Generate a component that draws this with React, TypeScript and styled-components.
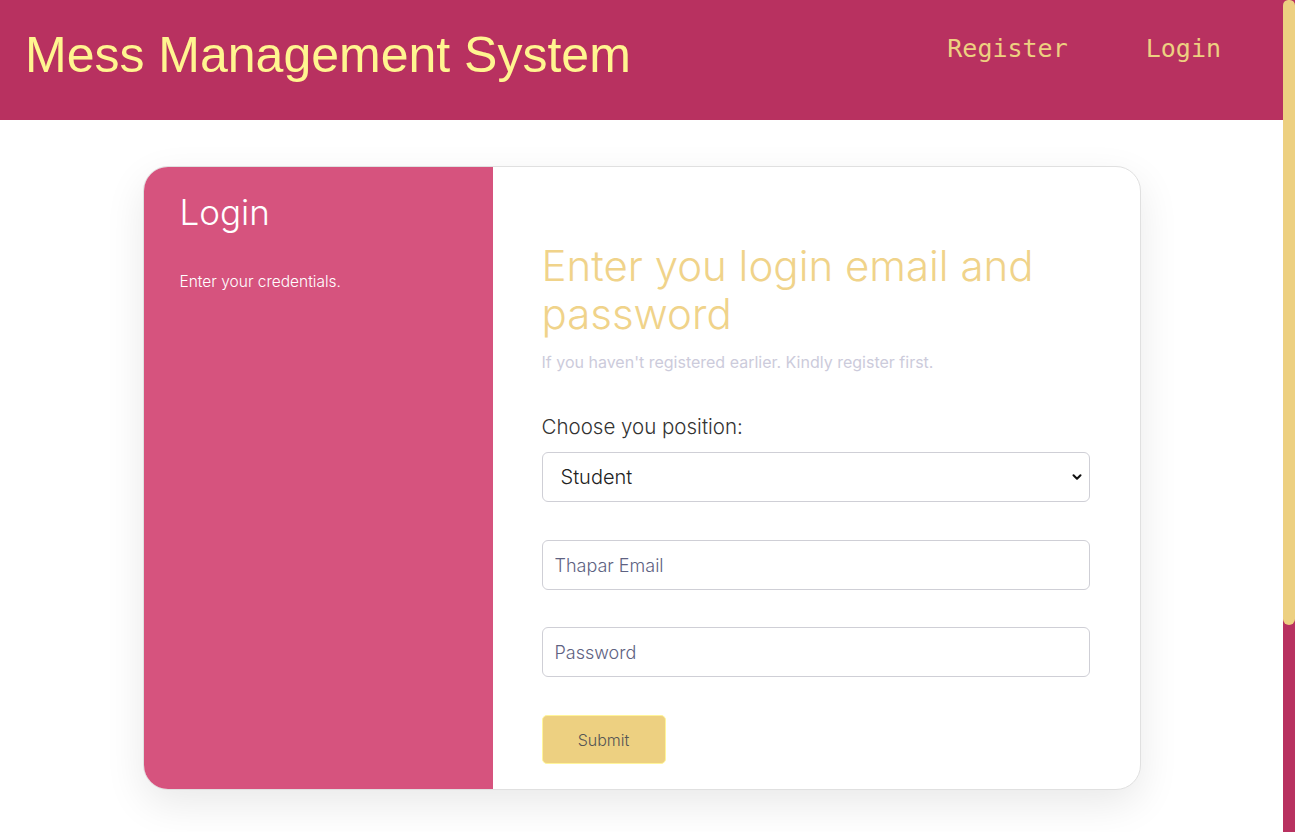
import React from "react";
import styled, { createGlobalStyle } from "styled-components";
import { ChevronDown } from "lucide-react";

const Global = createGlobalStyle`
  html, body { margin: 0; padding: 0; background: #ffffff; }
  body { font-family: "Inter", "Noto Sans", sans-serif; padding-right: 12px; }
  * { box-sizing: border-box; }
  ::-webkit-scrollbar { width: 0; }
`;

const ScrollTrack = styled.div`
  position: fixed;
  top: 0;
  right: 0;
  width: 12px;
  height: 100vh;
  background: #b83160;
  z-index: 10;
`;

const ScrollThumb = styled.div`
  height: 625px;
  background: #edd081;
  border-radius: 6px 6px 7px 7px;
`;

const Header = styled.header`
  height: 120px;
  background: #b83160;
  display: flex;
  align-items: flex-start;
  justify-content: space-between;
  padding: 0 62px 0 25px;
`;

const Title = styled.h1`
  margin: 25px 0 0;
  font-family: "Liberation Sans", Arial, sans-serif;
  font-weight: 400;
  font-size: 50px;
  line-height: 60px;
  color: #fff590;
`;

const Nav = styled.nav`
  display: flex;
  gap: 78px;
  margin-top: 34px;
`;

const NavLink = styled.a`
  font-family: "DejaVu Sans Mono", "Liberation Mono", monospace;
  font-size: 25px;
  line-height: 30px;
  color: #edd081;
  text-decoration: none;
  cursor: pointer;
`;

const Main = styled.main`
  padding: 46px 0 318px;
`;

const Card = styled.div`
  width: 998px;
  height: 624px;
  margin: 0 auto;
  display: grid;
  grid-template-columns: 349px 1fr;
  border-radius: 25px;
  border: 1px solid #e0e0e0;
  overflow: hidden;
  box-shadow: 0 14px 40px rgba(0, 0, 0, 0.09);
  background: #fff;
`;

const Side = styled.aside`
  background: #d6537e;
  padding: 23px 36px;
  color: #fff;
`;

const SideTitle = styled.h2`
  margin: 0;
  font-weight: 300;
  font-size: 35px;
  line-height: 44px;
  color: #ffffff;
`;

const SideText = styled.p`
  margin: 38px 0 0;
  font-size: 15.5px;
  font-weight: 300;
  line-height: 20px;
  color: #fff;
`;

const FormPane = styled.section`
  padding: 75px 50px 0 49px;
  display: flex;
  flex-direction: column;
  align-items: flex-start;
`;

const Heading = styled.h3`
  margin: 0;
  font-weight: 300;
  font-size: 42px;
  line-height: 48px;
  color: #f0d38a;
`;

const Sub = styled.p`
  margin: 13px 0 0;
  font-size: 16px;
  font-weight: 400;
  line-height: 22px;
  color: #cccbdb;
`;

const Label = styled.label`
  margin-top: 41px;
  font-size: 20.5px;
  font-weight: 300;
  line-height: 26px;
  color: #333;
`;

const SelectWrap = styled.div`
  position: relative;
  width: 548px;
  margin-top: 12px;
`;

const Select = styled.select`
  appearance: none;
  width: 100%;
  height: 50px;
  border: 1px solid #cfcfd6;
  border-radius: 6px;
  background: #fff;
  padding: 0 18px;
  font-family: "Inter", sans-serif;
  font-size: 20px;
  font-weight: 300;
  color: #222;
  outline: none;
`;

const Chevron = styled(ChevronDown)`
  position: absolute;
  right: 6px;
  top: 18px;
  pointer-events: none;
  color: #111;
`;

const Input = styled.input<{ $mt: number }>`
  width: 548px;
  height: 50px;
  margin-top: ${(p) => p.$mt}px;
  border: 1px solid #cfcfd6;
  border-radius: 6px;
  padding: 0 12px;
  font-family: "Inter", sans-serif;
  font-size: 18px;
  font-weight: 300;
  outline: none;
  &::placeholder { color: #5e6282; }
`;

const Button = styled.button`
  margin-top: 38px;
  width: 124px;
  height: 49px;
  background: #edd081;
  border: 1px solid #fff59a;
  border-radius: 5px;
  font-family: "Inter", sans-serif;
  font-size: 16px;
  font-weight: 300;
  color: #555;
  cursor: pointer;
`;

export default function App() {
  return (
    <>
      <Global />
      <ScrollTrack aria-hidden="true">
        <ScrollThumb />
      </ScrollTrack>
      <Header>
        <Title>Mess Management System</Title>
        <Nav>
          <NavLink>Register</NavLink>
          <NavLink>Login</NavLink>
        </Nav>
      </Header>
      <Main>
        <Card>
          <Side>
            <SideTitle>Login</SideTitle>
            <SideText>Enter your credentials.</SideText>
          </Side>
          <FormPane>
            <Heading>Enter you login email and password</Heading>
            <Sub>If you haven't registered earlier. Kindly register first.</Sub>
            <Label>Choose you position:</Label>
            <SelectWrap>
              <Select defaultValue="Student">
                <option>Student</option>
                <option>Admin</option>
              </Select>
              <Chevron size={14} strokeWidth={3.5} />
            </SelectWrap>
            <Input $mt={38} placeholder="Thapar Email" type="email" />
            <Input $mt={37} placeholder="Password" type="password" />
            <Button>Submit</Button>
          </FormPane>
        </Card>
      </Main>
    </>
  );
}
